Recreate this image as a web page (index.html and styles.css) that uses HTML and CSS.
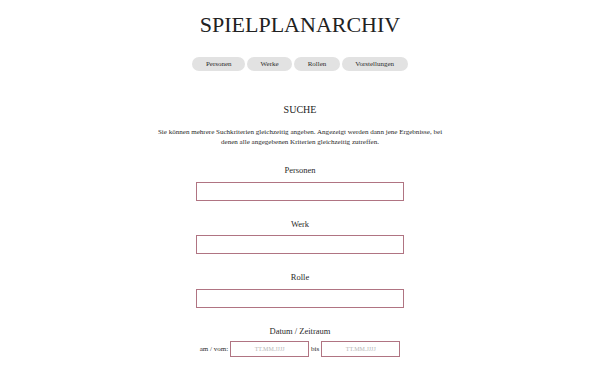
FILE: index.html
```html
<!DOCTYPE html>
<html lang="de">
<head>
<meta charset="utf-8">
<title>Spielplanarchiv</title>
<link rel="stylesheet" href="styles.css">
</head>
<body>
<div class="page">
  <h1 class="title">SPIELPLANARCHIV</h1>
  <nav class="nav">
    <a class="pill" href="#">Personen</a>
    <a class="pill" href="#">Werke</a>
    <a class="pill" href="#">Rollen</a>
    <a class="pill" href="#">Vorstellungen</a>
  </nav>
  <h2 class="heading">SUCHE</h2>
  <p class="intro">Sie können mehrere Suchkriterien gleichzeitig angeben. Angezeigt werden dann jene Ergebnisse, bei denen alle angegebenen Kriterien gleichzeitig zutreffen.</p>
  <form class="form">
    <div class="field">
      <label class="label">Personen</label>
      <input class="input" type="text">
    </div>
    <div class="field">
      <label class="label">Werk</label>
      <input class="input" type="text">
    </div>
    <div class="field">
      <label class="label">Rolle</label>
      <input class="input" type="text">
    </div>
    <div class="field">
      <label class="label">Datum / Zeitraum</label>
      <div class="daterow">
        <span class="small">am / vom:</span>
        <input class="date" type="text" placeholder="TT.MM.JJJJ">
        <span class="small">bis</span>
        <input class="date" type="text" placeholder="TT.MM.JJJJ">
      </div>
    </div>
  </form>
</div>
</body>
</html>
```

FILE: styles.css
```css
html, body {
  margin: 0;
  padding: 0;
  background: #fff;
}
body {
  font-family: "Liberation Serif", "DejaVu Serif", serif;
  color: #2a2a2a;
}
.page {
  display: flex;
  flex-direction: column;
  align-items: center;
  padding-top: 14px;
}
.title {
  margin: 0;
  font-size: 22px;
  line-height: 22px;
  font-weight: normal;
  color: #222;
}
.nav {
  display: flex;
  gap: 2px;
  margin-top: 21px;
}
.pill {
  display: block;
  height: 14px;
  line-height: 14px;
  padding: 0 13.5px;
  font-size: 7px;
  color: #2a2a2a;
  text-decoration: none;
  background: #e2e2e2;
  border-radius: 7px;
}
.heading {
  margin: 33px 0 0;
  font-size: 10px;
  line-height: 12px;
  font-weight: normal;
  color: #222;
}
.intro {
  margin: 11px 0 0;
  width: 292px;
  font-size: 7.05px;
  line-height: 10px;
  text-align: center;
}
.form {
  display: flex;
  flex-direction: column;
  align-items: center;
  margin-top: 18px;
  gap: 18px;
}
.field {
  display: flex;
  flex-direction: column;
  align-items: center;
  gap: 6.5px;
}
.label {
  font-size: 8.5px;
  line-height: 10px;
  color: #2a2a2a;
}
.input {
  box-sizing: border-box;
  width: 208px;
  height: 19px;
  margin: 0;
  border: 1px solid #b07482;
  background: #fff;
  outline: none;
}
.daterow {
  display: flex;
  align-items: center;
  gap: 2px;
  margin-top: -1.5px;
}
.small {
  font-size: 7px;
}
.date {
  box-sizing: border-box;
  width: 79px;
  height: 16px;
  margin: 0;
  border: 1px solid #b07482;
  background: #fff;
  font-family: "Liberation Serif", "DejaVu Serif", serif;
  font-size: 6px;
  text-align: center;
  outline: none;
}
.date::placeholder {
  color: #b5b5b5;
}
```
